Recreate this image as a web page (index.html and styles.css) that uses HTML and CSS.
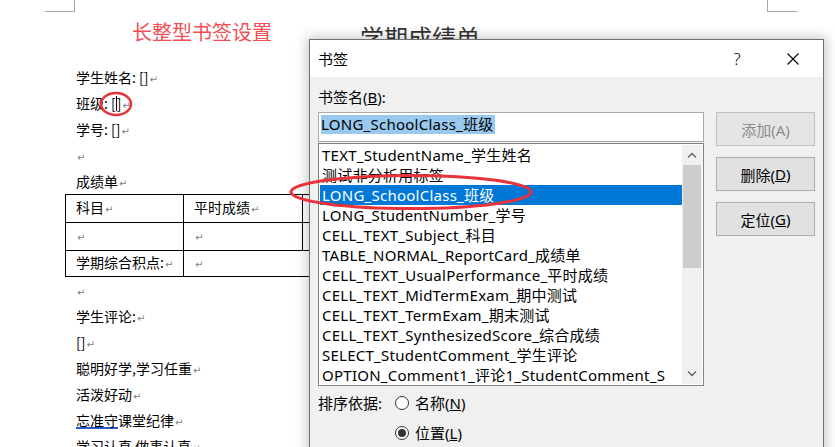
FILE: index.html
```html
<!DOCTYPE html>
<html lang="zh-CN">
<head>
<meta charset="utf-8">
<title>书签</title>
<link rel="stylesheet" href="styles.css">
</head>
<body>
<div class="screen">
  <div class="crop crop-tl"></div>
  <div class="crop crop-tr"></div>

  <div class="page">
    <div class="heading">
      <span class="title">长整型书签设置</span>
      <span class="doc-title">学期成绩单</span>
    </div>
    <p>学生姓名: []<span class="ret">↵</span></p>
    <p>班级: [<span class="caret"></span>]<span class="ret">↵</span></p>
    <p>学号: []<span class="ret">↵</span></p>
    <p><span class="ret">↵</span></p>
    <p>成绩单<span class="ret">↵</span></p>
    <table class="grades">
      <colgroup><col class="c1"><col class="c2"><col class="c3"><col class="c4"></colgroup>
      <tr><td>科目<span class="ret">↵</span></td><td>平时成绩<span class="ret">↵</span></td><td></td><td></td></tr>
      <tr><td><span class="ret">↵</span></td><td><span class="ret">↵</span></td><td></td><td></td></tr>
      <tr class="last"><td>学期综合积点:<span class="ret">↵</span></td><td colspan="3"><span class="ret">↵</span></td></tr>
    </table>
    <p><span class="ret">↵</span></p>
    <p>学生评论:<span class="ret">↵</span></p>
    <p>[]<span class="ret">↵</span></p>
    <p>聪明好学,学习任重<span class="ret">↵</span></p>
    <p>活泼好动<span class="ret">↵</span></p>
    <p><span class="squiggle">忘准守</span>课堂纪律<span class="ret">↵</span></p>
    <p>学习认真 做事认真<span class="ret">↵</span></p>
  </div>

  <div class="dialog">
    <div class="titlebar">
      <span class="dlg-title">书签</span>
      <span class="help">?</span>
      <span class="close">
        <svg width="12" height="12" viewBox="0 0 12 12"><path d="M0.5 0.5 L11.5 11.5 M11.5 0.5 L0.5 11.5" stroke="#000" stroke-width="1.1" fill="none"/></svg>
      </span>
    </div>
    <div class="dlg-body">
      <div class="field-label">书签名(<u>B</u>):</div>
      <div class="dlg-main">
        <div class="left-col">
          <div class="name-input"><span class="sel">LONG_SchoolClass_班级</span></div>
          <div class="listbox">
            <ul class="items">
              <li>TEXT_StudentName_学生姓名</li>
              <li>测试非分析用标签</li>
              <li class="selected">LONG_SchoolClass_班级</li>
              <li>LONG_StudentNumber_学号</li>
              <li>CELL_TEXT_Subject_科目</li>
              <li>TABLE_NORMAL_ReportCard_成绩单</li>
              <li>CELL_TEXT_UsualPerformance_平时成绩</li>
              <li>CELL_TEXT_MidTermExam_期中测试</li>
              <li>CELL_TEXT_TermExam_期末测试</li>
              <li>CELL_TEXT_SynthesizedScore_综合成绩</li>
              <li>SELECT_StudentComment_学生评论</li>
              <li>OPTION_Comment1_评论1_StudentComment_S</li>
            </ul>
            <div class="scrollbar">
              <div class="arrow">
                <svg width="10" height="6" viewBox="0 0 10 6"><path d="M1 5.5 L5 1.5 L9 5.5" stroke="#606060" stroke-width="1.3" fill="none"/></svg>
              </div>
              <div class="track"><div class="thumb"></div></div>
              <div class="arrow">
                <svg width="10" height="6" viewBox="0 0 10 6"><path d="M1 0.5 L5 4.5 L9 0.5" stroke="#606060" stroke-width="1.3" fill="none"/></svg>
              </div>
            </div>
          </div>
          <div class="sort">
            <span class="sort-label">排序依据:</span>
            <div class="radios">
              <div class="radio"><span class="dot"></span>名称(<u>N</u>)</div>
              <div class="radio checked"><span class="dot"></span>位置(<u>L</u>)</div>
            </div>
          </div>
        </div>
        <div class="buttons">
          <div class="btn disabled">添加(A)</div>
          <div class="btn">删除(<u>D</u>)</div>
          <div class="btn">定位(<u>G</u>)</div>
        </div>
      </div>
    </div>
  </div>

  <svg class="annot" width="835" height="447" viewBox="0 0 835 447">
    <ellipse cx="116" cy="104" rx="15" ry="11" fill="none" stroke="#e8333a" stroke-width="2.5"/>
    <ellipse cx="411" cy="192" rx="120" ry="16.5" fill="none" stroke="#e8333a" stroke-width="3"/>
  </svg>
</div>
</body>
</html>
```

FILE: styles.css
```css
html, body {
  margin: 0;
  padding: 0;
  background: #ffffff;
}

.screen {
  position: relative;
  width: 835px;
  height: 447px;
  overflow: hidden;
  background: #ffffff;
}

/* page crop marks */
.crop {
  position: absolute;
  top: 0;
  width: 29px;
  height: 11px;
  border-bottom: 1px solid #a6a6a6;
}
.crop-tl {
  left: 45px;
  border-right: 1px solid #a6a6a6;
}
.crop-tr {
  left: 767px;
  border-left: 1px solid #a6a6a6;
}

/* document */
.page {
  padding-left: 76px;
  font-family: "Noto Sans CJK SC", "Noto Sans", sans-serif;
  font-size: 14px;
  color: #000;
}

.heading {
  display: flex;
  align-items: flex-start;
  height: 44px;
  padding-top: 20px;
  margin-left: 56px;
}
.title {
  font-size: 20px;
  line-height: 24px;
  color: #f24f55;
}
.doc-title {
  margin-left: 88px;
  margin-top: 3px;
  font-size: 24px;
  line-height: 28px;
  color: #333;
}

.page p {
  margin: 0;
  height: 26px;
  line-height: 26px;
  white-space: nowrap;
}

.ret {
  color: #808080;
  font-family: "DejaVu Sans", sans-serif;
  font-size: 10px;
  margin-left: 1px;
}

.caret {
  display: inline-block;
  width: 1px;
  height: 15px;
  background: #000;
  vertical-align: -2px;
}

.squiggle {
  background-image: linear-gradient(#2a5bd7, #2a5bd7);
  background-repeat: no-repeat;
  background-position: left bottom 1px;
  background-size: 100% 2px;
}

.grades {
  margin-left: -11px;
  border-collapse: collapse;
  table-layout: fixed;
  width: 480px;
}
.grades .c1 { width: 118px; }
.grades .c2 { width: 119px; }
.grades .c3 { width: 120px; }
.grades .c4 { width: 123px; }
.grades td {
  border: 1px solid #000;
  height: 24px;
  padding: 0 0 0 10px;
  line-height: 24px;
  white-space: nowrap;
  vertical-align: middle;
  overflow: hidden;
}
.grades tr.last td {
  height: 23px;
  line-height: 23px;
}

/* dialog window */
.dialog {
  position: absolute;
  left: 309px;
  top: 39px;
  width: 513px;
  height: 430px;
  border: 1px solid #6f6f6f;
  background: #f0f0f0;
  box-shadow: 0 0 12px 2px rgba(0, 0, 0, 0.22);
  font-family: "Noto Sans", "Noto Sans CJK SC", sans-serif;
  font-size: 15px;
  color: #000;
}

.titlebar {
  display: flex;
  align-items: center;
  height: 37px;
  padding: 0 15px 0 8px;
  background: #ffffff;
}
.dlg-title {
  flex: 1;
  font-family: "Noto Sans CJK SC", sans-serif;
  font-size: 15px;
}
.help {
  width: 30px;
  margin-right: 26px;
  text-align: center;
  font-size: 17px;
  font-weight: 300;
}
.close {
  width: 30px;
  display: flex;
  justify-content: center;
}

.dlg-body {
  padding: 10px 0 0 8px;
}

.field-label {
  line-height: 20px;
  height: 20px;
  margin-bottom: 5px;
}

.dlg-main {
  display: flex;
  gap: 12px;
}

.left-col {
  width: 386px;
}

.name-input {
  box-sizing: border-box;
  height: 30px;
  border: 1px solid #a9a9a9;
  background: #fff;
  padding: 2px 0 0 2px;
  display: flex;
  align-items: flex-start;
}
.sel {
  background: #99c9ef;
  line-height: 19px;
  height: 19px;
  padding-right: 1px;
  white-space: nowrap;
  letter-spacing: 0.25px;
}

.listbox {
  box-sizing: border-box;
  margin-top: 1px;
  height: 243px;
  border: 1px solid #828282;
  background: #fff;
  padding: 1px;
  display: flex;
}
.items {
  flex: 1;
  min-width: 0;
  list-style: none;
  margin: 0;
  padding: 0;
  overflow: hidden;
}
.items li {
  height: 20px;
  line-height: 20px;
  padding-left: 2px;
  white-space: nowrap;
  overflow: hidden;
  letter-spacing: 0.25px;
}
.items li.selected {
  background: #0078d7;
  color: #fff;
}

.scrollbar {
  width: 20px;
  display: flex;
  flex-direction: column;
  background: #f0f0f0;
}
.arrow {
  height: 20px;
  display: flex;
  align-items: center;
  justify-content: center;
}
.track {
  flex: 1;
}
.thumb {
  height: 103px;
  margin: 0 1px;
  background: #cdcdcd;
}

.sort {
  margin-top: 7px;
  display: flex;
}
.sort-label {
  width: 77px;
  line-height: 20px;
}
.radios {
  display: flex;
  flex-direction: column;
  gap: 10px;
}
.radio {
  display: flex;
  align-items: center;
  line-height: 20px;
  height: 20px;
}
.dot {
  box-sizing: border-box;
  width: 14px;
  height: 14px;
  border: 1px solid #333;
  border-radius: 50%;
  background: #fff;
  margin-right: 6px;
  display: flex;
  align-items: center;
  justify-content: center;
}
.radio.checked .dot::after {
  content: "";
  width: 8px;
  height: 8px;
  border-radius: 50%;
  background: #333;
}

.buttons {
  width: 99px;
  display: flex;
  flex-direction: column;
  gap: 11px;
}
.btn {
  box-sizing: border-box;
  height: 34px;
  border: 1px solid #adadad;
  background: #e1e1e1;
  display: flex;
  align-items: center;
  justify-content: center;
  white-space: nowrap;
}
.btn.disabled {
  color: #8c8c8c;
  border-color: #bfbfbf;
  background: #e5e5e5;
}

/* annotation overlay */
.annot {
  position: absolute;
  left: 0;
  top: 0;
  pointer-events: none;
}
```
